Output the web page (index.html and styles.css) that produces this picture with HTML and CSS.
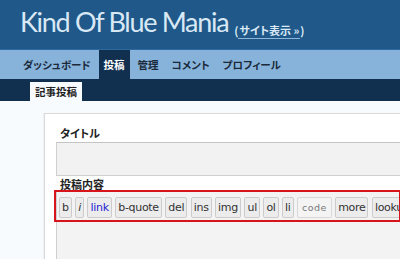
FILE: index.html
```html
<!DOCTYPE html>
<html lang="ja">
<head>
<meta charset="utf-8">
<link rel="stylesheet" href="styles.css">
</head>
<body>
<header class="masthead">
  <h1 class="site-title">Kind Of Blue Mania</h1>
  <span class="view-site">(<a href="#">サイト表示 »</a>)</span>
</header>
<nav class="main-nav">
  <a href="#" class="nav-item">ダッシュボード</a>
  <a href="#" class="nav-item active">投稿</a>
  <a href="#" class="nav-item">管理</a>
  <a href="#" class="nav-item">コメント</a>
  <a href="#" class="nav-item">プロフィール</a>
</nav>
<div class="sub-nav">
  <a href="#" class="sub-item active">記事投稿</a>
</div>
<main class="content">
  <section class="panel">
    <label class="field-label">タイトル</label>
    <div class="title-input"></div>
    <label class="field-label body-label">投稿内容</label>
    <div class="editor">
      <div class="toolbar">
        <span class="btn">b</span>
        <span class="btn italic">i</span>
        <span class="btn link">link</span>
        <span class="btn">b-quote</span>
        <span class="btn">del</span>
        <span class="btn">ins</span>
        <span class="btn">img</span>
        <span class="btn">ul</span>
        <span class="btn">ol</span>
        <span class="btn">li</span>
        <span class="btn code">code</span>
        <span class="btn">more</span>
        <span class="btn">lookup</span>
      </div>
      <div class="highlight"></div>
    </div>
  </section>
</main>
</body>
</html>
```
FILE: styles.css
```css
html, body {
  margin: 0;
  padding: 0;
}
body {
  width: 400px;
  height: 259px;
  overflow: hidden;
  background: #f8fbfe;
  font-family: "Noto Sans CJK JP", "DejaVu Sans", sans-serif;
}
a {
  text-decoration: none;
  color: inherit;
}
.masthead {
  height: 50px;
  background: #1f5889;
  border-bottom: 1px solid #2c6aa0;
  display: flex;
  align-items: center;
  padding-left: 20px;
  box-sizing: border-box;
}
.site-title {
  margin: 0;
  font-family: Lato, "Open Sans", sans-serif;
  font-weight: 400;
  font-size: 27px;
  letter-spacing: -1.3px;
  color: #d9e8f5;
  line-height: 1;
  position: relative;
  top: -3px;
}
.view-site {
  margin-left: 6px;
  margin-top: 10px;
  font-size: 11px;
  font-weight: 700;
  color: #d9e8f5;
  font-feature-settings: "palt";
}
.view-site a {
  border-bottom: 1px solid #8fb5d8;
  padding: 0 1px;
}
.main-nav {
  height: 29px;
  background: #87b3da;
  display: flex;
  align-items: stretch;
  padding-left: 18px;
}
.nav-item {
  display: flex;
  align-items: center;
  padding: 0 5px 1px;
  margin-right: 3px;
  font-size: 10.5px;
  font-weight: 700;
  color: #1a2a3a;
  font-feature-settings: "palt";
}
.nav-item.active {
  background: #11304f;
  color: #ffffff;
}
.sub-nav {
  height: 22px;
  background: #11304f;
  display: flex;
  align-items: flex-end;
  padding-left: 30px;
}
.sub-item {
  height: 19px;
  display: flex;
  align-items: center;
  padding: 0 5px;
  background: #f8fbfe;
  font-size: 10.5px;
  font-weight: 700;
  color: #222;
  font-feature-settings: "palt";
}
.content {
  padding: 12px 0 0 44px;
}
.panel {
  background: #fff;
  border: 1px solid #dadada;
  border-right: none;
  box-shadow: -1px 0 0 #eef2f5;
  padding: 11px 0 0 11px;
  height: 200px;
}
.field-label {
  display: block;
  margin-left: 4px;
  font-size: 11px;
  font-weight: 700;
  color: #222;
  line-height: 16px;
  font-feature-settings: "palt";
}
.title-input {
  height: 32px;
  margin-top: 1px;
  background: #f2f2f2;
  border: 1px solid #cfcfcf;
  border-top-color: #c4c4c4;
  border-right: none;
}
.body-label {
  margin-top: 1px;
  line-height: 14px;
}
.editor {
  position: relative;
  background: #f3f3f3;
  border: 1px solid #cfcfcf;
  border-right: none;
  height: 80px;
}
.toolbar {
  display: flex;
  gap: 3.5px;
  padding: 5px 0 0 2px;
  white-space: nowrap;
  overflow: hidden;
}
.btn {
  display: inline-flex;
  align-items: center;
  flex-shrink: 0;
  height: 19px;
  padding: 0 2px;
  background: #ececec;
  border: 1px solid #cccccc;
  border-radius: 2px;
  font-family: "DejaVu Sans", sans-serif;
  font-size: 11px;
  letter-spacing: -0.3px;
  color: #333;
}
.btn.italic {
  font-style: italic;
}
.btn.link {
  color: #2424d0;
}
.btn.code {
  font-size: 9.5px;
  letter-spacing: 0.4px;
  color: #777;
  background: #f4f4f4;
  border-color: #d8d8d8;
  padding: 0 4px;
}
.highlight {
  position: absolute;
  left: -3px;
  top: -2px;
  width: 343px;
  height: 28px;
  border: 2px solid #d7141b;
}
```
